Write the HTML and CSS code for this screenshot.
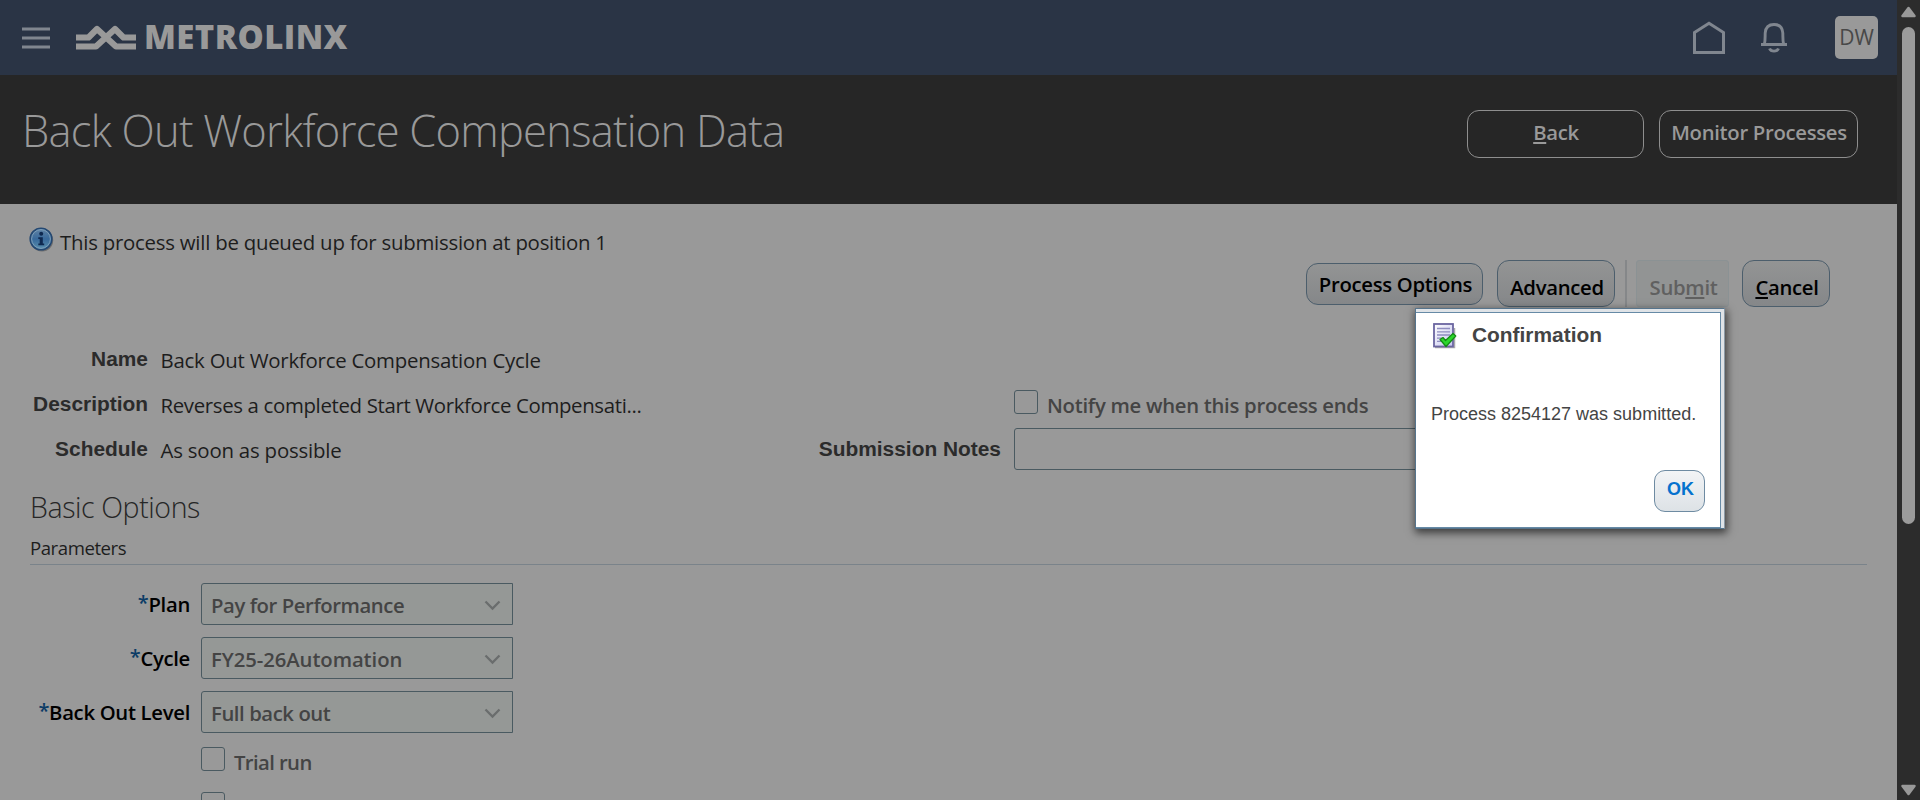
FILE: index.html
```html
<!DOCTYPE html>
<html lang="en">
<head>
<meta charset="utf-8">
<title>Back Out Workforce Compensation Data</title>
<link rel="stylesheet" href="styles.css">
</head>
<body>
<div class="page">
  <header class="topbar">
    <svg class="menu" width="28" height="22" viewBox="0 0 28 22"><path d="M0 2h28M0 11h28M0 20h28" stroke="#80868f" stroke-width="2.8"/></svg>
    <svg class="mark" width="60" height="26" viewBox="0 0 60 26" fill="none" stroke="#999" stroke-width="6.2" stroke-linejoin="round"><path d="M0 12.5H12.5L21 4L40 21.500H60"/><path d="M0 21.500H20L39 4L47.500 12.500H60"/></svg>
    <span class="brand">METROLINX</span>
    <div class="top-icons">
      <svg class="home" width="34" height="34" viewBox="0 0 34 34" fill="none" stroke="#80868f" stroke-width="3"><path d="M2.500 11.500L17 2.300L31.500 11.500V31.500H2.500Z"/></svg>
      <svg class="bell" width="28" height="32" viewBox="0 0 28 32" fill="none" stroke="#80868f" stroke-width="2.900"><path d="M1 22.500H27M4.300 22.500C5.500 18 5 14 5.200 11C5.600 5.500 9 2.500 14 2.500S22.400 5.500 22.800 11C23 14 22.500 18 23.700 22.500"/><path d="M9.500 26.500C11 30 17 30 18.500 26.500"/></svg>
      <span class="avatar">DW</span>
    </div>
  </header>
  <section class="titlebar">
    <h1>Back Out Workforce Compensation Data</h1>
    <button class="ghost back"><u>B</u>ack</button>
    <button class="ghost monitor">Monitor Processes</button>
  </section>
  <main>
    <div class="message">
      <svg width="25" height="25" viewBox="0 0 25 25"><defs><linearGradient id="info" x1="0" y1="0" x2="0" y2="1"><stop offset="0" stop-color="#6384a5"/><stop offset=".5" stop-color="#38699b"/><stop offset="1" stop-color="#5b91ae"/></linearGradient></defs><ellipse cx="13" cy="13.300" rx="11.200" ry="11.300" fill="#6e6e6e"/><circle cx="12" cy="12" r="10.800" fill="url(#info)" stroke="#244872" stroke-width="1.600"/><circle cx="12" cy="12" r="9.400" fill="none" stroke="#7c9fba" stroke-width="1"/><circle cx="12.200" cy="6.800" r="2" fill="#0e2950"/><path d="M9.300 10.300H13.800V16.500H15.200V18.200H9.300V16.500H10.700V12H9.300Z" fill="#0e2950"/></svg>
      <span class="queued">This process will be queued up for submission at position 1</span>
    </div>
    <div class="toolbar">
      <button class="btn options">Process Options</button>
      <button class="btn tall advanced">Advanced</button>
      <i class="divider"></i>
      <button class="btn tall submit">Sub<u>m</u>it</button>
      <button class="btn tall cancel"><u>C</u>ancel</button>
    </div>
    <div class="summary">
      <dl class="details">
        <dt>Name</dt><dd class="cycle-name">Back Out Workforce Compensation Cycle</dd>
        <dt>Description</dt><dd class="desc">Reverses a completed Start Workforce Compensati...</dd>
        <dt>Schedule</dt><dd class="when">As soon as possible</dd>
      </dl>
      <div class="notify">
        <i class="box"></i><span class="notify-text">Notify me when this process ends</span>
        <b class="notes-label">Submission Notes</b><div class="notes"></div>
      </div>
    </div>
    <h2>Basic Options</h2>
    <h3>Parameters</h3>
    <div class="fields">
      <div class="field"><label><sup>*</sup>Plan</label><div class="select"><span class="pay">Pay for Performance</span><svg width="17" height="11" viewBox="0 0 17 11"><path d="M1.500 1.500L8.500 8.500L15.500 1.500" fill="none" stroke="#6a6d6d" stroke-width="2.300"/></svg></div></div>
      <div class="field"><label><sup>*</sup>Cycle</label><div class="select"><span class="code">FY25-26Automation</span><svg width="17" height="11" viewBox="0 0 17 11"><path d="M1.500 1.500L8.500 8.500L15.500 1.500" fill="none" stroke="#6a6d6d" stroke-width="2.300"/></svg></div></div>
      <div class="field"><label><sup>*</sup>Back Out Level</label><div class="select"><span class="pay">Full back out</span><svg width="17" height="11" viewBox="0 0 17 11"><path d="M1.500 1.500L8.500 8.500L15.500 1.500" fill="none" stroke="#6a6d6d" stroke-width="2.300"/></svg></div></div>
      <div class="check"><i class="box"></i><span>Trial run</span></div>
      <div class="check"><i class="box"></i><span>Include process messages in log file</span></div>
    </div>
  </main>
</div>
<aside class="scrollbar">
  <svg width="17" height="12" viewBox="0 0 17 12"><path d="M8.500 2L14.500 10H2.500Z" fill="#999" stroke="#999" stroke-width="2.500" stroke-linejoin="round"/></svg>
  <div class="thumb"></div>
  <svg class="down" width="17" height="12" viewBox="0 0 17 12"><path d="M8.500 10L14.500 2H2.500Z" fill="#999" stroke="#999" stroke-width="2.500" stroke-linejoin="round"/></svg>
</aside>
<div class="dialog">
  <div class="panel">
    <div class="dialog-head">
      <svg width="25" height="26" viewBox="0 0 25 26"><defs><linearGradient id="sheet" x1="0" y1="0" x2="1" y2="1"><stop offset="0" stop-color="#fff"/><stop offset="1" stop-color="#c5c5ee"/></linearGradient></defs><path d="M2 24.500H21.500V5" fill="none" stroke="#aaa" stroke-width="1.500"/><rect x="1" y="1" width="19" height="22.500" fill="url(#sheet)" stroke="#6b65a0" stroke-width="1.800"/><path d="M4 5.500H17M4 8.800H17M4 12H17M4 15.200H9M4 18.400H8" stroke="#8f8dc0" stroke-width="1.300"/><path d="M7 16.500L10 14.500L12.500 17.500L20 10.500L22.800 13L13 23.500Z" fill="#2cd62c" stroke="#138a13" stroke-width="1.200" stroke-linejoin="round"/></svg>
      <strong>Confirmation</strong>
    </div>
    <p>Process 8254127 was submitted.</p>
    <button class="ok">OK</button>
  </div>
</div>
</body>
</html>
```
FILE: styles.css
```css
* { box-sizing: border-box; margin: 0; padding: 0; }
body {
  display: flex;
  width: 1920px;
  height: 800px;
  overflow: hidden;
  position: relative;
  background: #999;
  font-family: "Open Sans", "Noto Sans", sans-serif;
  font-size: 20.4px;
  color: #1d1d1d;
}
button { font-family: inherit; white-space: nowrap; }
u { text-decoration-thickness: 2px; text-underline-offset: 2px; text-decoration-skip-ink: none; }
.page { width: 1897px; height: 800px; overflow: hidden; }

.topbar { display: flex; align-items: flex-start; height: 75px; padding: 0 19px 0 22px; background: #2a3445; }
.menu { margin: 27px 26px 0 0; }
.mark { margin-top: 25px; }
.brand { margin-left: 8px; font-size: 33px; font-weight: 800; line-height: 50px; padding-top: 12px; color: #999; letter-spacing: .4px; }
.top-icons { display: flex; margin-left: auto; }
.home { margin-top: 21px; }
.bell { margin: 22px 47px 0 34px; }
.avatar { width: 43px; height: 43px; margin-top: 16px; border-radius: 5px; background: #999; color: #484848; font-size: 21px; line-height: 42px; text-align: center; }

.titlebar { display: flex; align-items: flex-start; height: 129px; padding: 35px 39px 0 22px; background: #262626; }
h1 { flex: 1; font-size: 43.5px; font-weight: 300; line-height: 40px; letter-spacing: -.76px; padding-top: 1px; color: #999; }
.ghost { height: 48px; border: 1px solid #8e8e8e; border-radius: 12px; background: none; color: #999; font-size: 20.3px; font-weight: 600; line-height: 42px; letter-spacing: -.3px; padding: 0 0 4px 1px; }
.back { width: 177px; margin-right: 15px; }
.monitor { width: 199px; }

main { padding-top: 23px; }
.message { display: flex; height: 30px; padding-left: 30px; }
.message svg { margin-left: -1px; margin-right: 1px; }
.queued { margin-left: 5px; line-height: 30px; letter-spacing: -.24px; }
.toolbar { display: flex; height: 47px; margin: 3px 67px 0 0; justify-content: flex-end; align-items: flex-start; }
.btn { border: 1px solid #4c5e6c; border-radius: 12px; background: linear-gradient(#939494, #858789); color: #000; font-size: 20.3px; font-weight: 600; letter-spacing: -.29px; padding-left: 2px; }
.options { width: 177px; height: 42px; margin: 3px 14px 0 0; }
.tall { height: 47px; padding-top: 7px; }
.advanced { width: 118px; }
.divider { width: 2px; height: 47px; margin: 0 9px 0 10px; background: #858789; }
.submit { width: 93px; margin-right: 13px; border-color: #8b9294; border-radius: 3px; background: #929494; color: #606060; }
.cancel { width: 88px; }

.summary { display: flex; margin-top: 30px; }
.details { display: grid; grid-template: repeat(3, 45px) / 148px 640px; column-gap: 12.5px; width: 801px; }
dt { text-align: right; font: bold 20.9px/43px "Liberation Sans", Arial, sans-serif; color: #2b2b2b; }
dd { line-height: 46px; white-space: nowrap; }
.cycle-name { letter-spacing: -.23px; }
.desc { letter-spacing: -.34px; }
.when { letter-spacing: -.2px; }
.notify { display: grid; grid-template: 45px 45px / 200px 24px 453px; padding-top: 45px; }
.box { display: block; width: 24px; height: 24px; border: 1px solid #4a5a61; border-radius: 3px; }
.notify .box { grid-column: 2; margin: 8px 0 0 13px; }
.notify-text { margin-left: 22px; line-height: 46px; font-weight: 600; font-size: 20.3px; letter-spacing: -.28px; color: #444; }
.notes-label { text-align: right; font: bold 20.9px/43px "Liberation Sans", Arial, sans-serif; color: #2b2b2b; }
.notes { grid-column: 2 / 4; height: 42px; margin: 1px 0 0 13px; border: 1px solid #4a5a61; border-radius: 3px; }

h2 { margin: 15px 30px 0; font-size: 28.5px; font-weight: 300; line-height: 40px; letter-spacing: -.4px; color: #262626; }
h3 { margin: 5px 30px 0; font-size: 18.6px; font-weight: 400; line-height: 32px; letter-spacing: -.45px; border-bottom: 1px solid #7a838a; }
.fields { padding-top: 18px; }
.field { display: flex; height: 42px; margin-bottom: 12px; }
label { width: 190px; margin-right: 11px; text-align: right; line-height: 43px; font-size: 20.3px; font-weight: 600; letter-spacing: -.3px; color: #000; white-space: nowrap; }
sup { font-size: 20px; line-height: 0; vertical-align: 2px; color: #0c3c66; }
.select { display: flex; align-items: flex-start; justify-content: space-between; width: 312px; padding: 0 11px 0 9px; border: 1px solid #4a5a61; border-radius: 3px 0 0 3px; background: #959896; color: #444; font-size: 20.3px; font-weight: 600; line-height: 42px; }
.select svg { margin-top: 16px; }
.pay { letter-spacing: -.42px; }
.code { letter-spacing: -.07px; }
.check { display: flex; height: 45px; margin-left: 201px; font-size: 20.3px; font-weight: 600; color: #444; }
.field + .check { margin-top: 14px; }
.check span { margin-left: 9px; line-height: 30px; letter-spacing: -.6px; white-space: nowrap; }

.scrollbar { display: flex; flex-direction: column; width: 23px; height: 800px; padding: 6px 0 4px 3px; background: #2c2c2c; }
.thumb { width: 13px; height: 497px; margin: 9px 0 0 2px; border-radius: 7px; background: #9b9b9b; }
.down { margin-top: auto; }

.dialog { position: absolute; left: 1415px; top: 308px; width: 310px; height: 221px; padding: 3px 3px 0 0; border: 1px solid #56748c; border-right-color: #8c9aa6; background: #dfe3e7; box-shadow: 1px 3px 8px 1px rgba(0, 0, 0, .6); }
.panel { height: 216px; padding: 10px 15px 0 17px; border: 1px solid #668aa6; border-left: 0; background: #fff; color: #444; font-family: "Liberation Sans", Arial, sans-serif; display: flex; flex-direction: column; }
.dialog-head { display: flex; height: 26px; }
strong { margin-left: 14px; font-size: 20.9px; line-height: 23px; }
.panel p { margin-top: 51px; font-size: 18px; line-height: 28px; white-space: nowrap; margin-left: -2px; }
.ok { align-self: flex-end; width: 51px; height: 42px; margin-top: 42px; padding: 0 0 4px 2px; border: 1px solid #6e8ba2; border-radius: 11px; background: linear-gradient(#f2f4f6, #dde2e6); color: #0572ce; font-size: 18px; font-weight: bold; }
```
